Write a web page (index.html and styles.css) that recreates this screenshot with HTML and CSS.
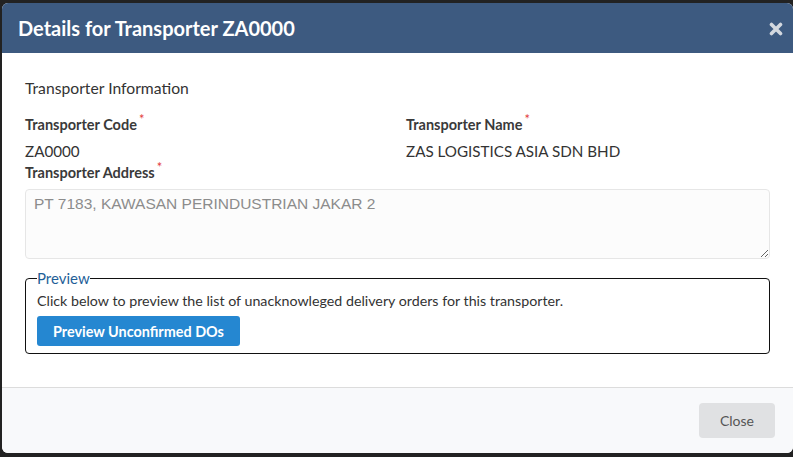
FILE: index.html
```html
<!DOCTYPE html>
<html>
<head>
<meta charset="utf-8">
<link rel="stylesheet" href="styles.css">
</head>
<body>
<div class="modal">
  <div class="modal-header">
    <h1 class="modal-title">Details for Transporter ZA0000</h1>
    <span class="modal-close"><svg width="14" height="14" viewBox="0 0 14 14"><path d="M2.5 2.5 L11.5 11.5 M11.5 2.5 L2.5 11.5" stroke="#d3d8df" stroke-width="3.6" stroke-linecap="round"/></svg></span>
  </div>
  <div class="modal-body">
    <div class="section-title">Transporter Information</div>
    <div class="grid">
      <div class="field">
        <div class="label">Transporter Code<span class="req">*</span></div>
        <div class="value">ZA0000</div>
      </div>
      <div class="field">
        <div class="label">Transporter Name<span class="req">*</span></div>
        <div class="value">ZAS LOGISTICS ASIA SDN BHD</div>
      </div>
    </div>
    <div class="label">Transporter Address<span class="req">*</span></div>
    <textarea class="address" readonly>PT 7183, KAWASAN PERINDUSTRIAN JAKAR 2</textarea>
    <fieldset class="preview">
      <legend>Preview</legend>
      <div class="preview-text">Click below to preview the list of unacknowleged delivery orders for this transporter.</div>
      <button class="btn-primary">Preview Unconfirmed DOs</button>
    </fieldset>
  </div>
  <div class="modal-footer">
    <button class="btn-close">Close</button>
  </div>
</div>
</body>
</html>
```

FILE: styles.css
```css
html, body {
  margin: 0;
  padding: 0;
  background: #222222;
  height: 100%;
  overflow: hidden;
}
body {
  font-family: Lato, "Open Sans", sans-serif;
  color: #333;
}
.modal {
  margin: 3px 0 0 2px;
  width: 791px;
  height: 450px;
  background: #fff;
  border-radius: 6px;
  overflow: hidden;
  display: flex;
  flex-direction: column;
}
.modal-header {
  height: 50px;
  flex: none;
  background: #3d5a80;
  display: flex;
  align-items: center;
  justify-content: space-between;
  padding: 0 10px 0 16px;
}
.modal-title {
  margin: 0;
  font-size: 20px;
  font-weight: 700;
  color: #fff;
  line-height: 24px;
}
.modal-close {
  display: flex;
  margin-top: 1px;
}
.modal-body {
  flex: 1;
  padding: 25px 23px 0 23px;
  border-bottom: 1px solid #dcdcdc;
}
.section-title {
  font-size: 15.7px;
  line-height: 20px;
  color: #333;
  margin-bottom: 17px;
}
.grid {
  display: grid;
  grid-template-columns: 381px 1fr;
}
.label {
  font-size: 14.5px;
  font-weight: 700;
  line-height: 20px;
  color: #3a3a3a;
}
.req {
  color: #e23b3b;
  font-size: 13px;
  position: relative;
  top: -6px;
  margin-left: 2px;
  font-weight: 400;
}
.value {
  font-size: 15.2px;
  line-height: 20px;
  margin-top: 6px;
  margin-bottom: 2px;
  color: #333;
}
.address {
  display: block;
  box-sizing: border-box;
  width: 745px;
  height: 70px;
  margin-top: 6px;
  background: #fcfcfc;
  border: 1px solid #e6e6e6;
  border-radius: 4px;
  font-family: "Liberation Sans", Arial, sans-serif;
  font-size: 15.5px;
  line-height: 18px;
  color: #8c8c8c;
  padding: 5px 8px;
  resize: vertical;
  outline: none;
}
.preview {
  margin: 11px 0 0 0;
  width: 745px;
  box-sizing: border-box;
  border: 1px solid #111;
  border-radius: 4px;
  padding: 0 11px 7px 11px;
}
.preview legend {
  padding: 0;
  font-size: 15px;
  line-height: 16px;
  color: #1f5f99;
}
.preview-text {
  font-size: 14.25px;
  line-height: 20px;
  margin-top: 5px;
  color: #333;
}
.btn-primary {
  margin-top: 5px;
  height: 30px;
  width: 203px;
  border: none;
  border-radius: 3px;
  background: #2587d1;
  color: #fff;
  font-family: Lato, sans-serif;
  font-size: 14.4px;
  font-weight: 700;
  padding: 0;
}
.modal-footer {
  height: 65px;
  flex: none;
  background: #f8f9fb;
  display: flex;
  justify-content: flex-end;
  align-items: flex-start;
  padding: 15px 18px 0 0;
  box-sizing: border-box;
}
.btn-close {
  width: 76px;
  height: 35px;
  border: none;
  border-radius: 4px;
  background: #e0e1e3;
  color: #555;
  font-family: Lato, sans-serif;
  font-size: 14px;
  padding: 0;
}
```
